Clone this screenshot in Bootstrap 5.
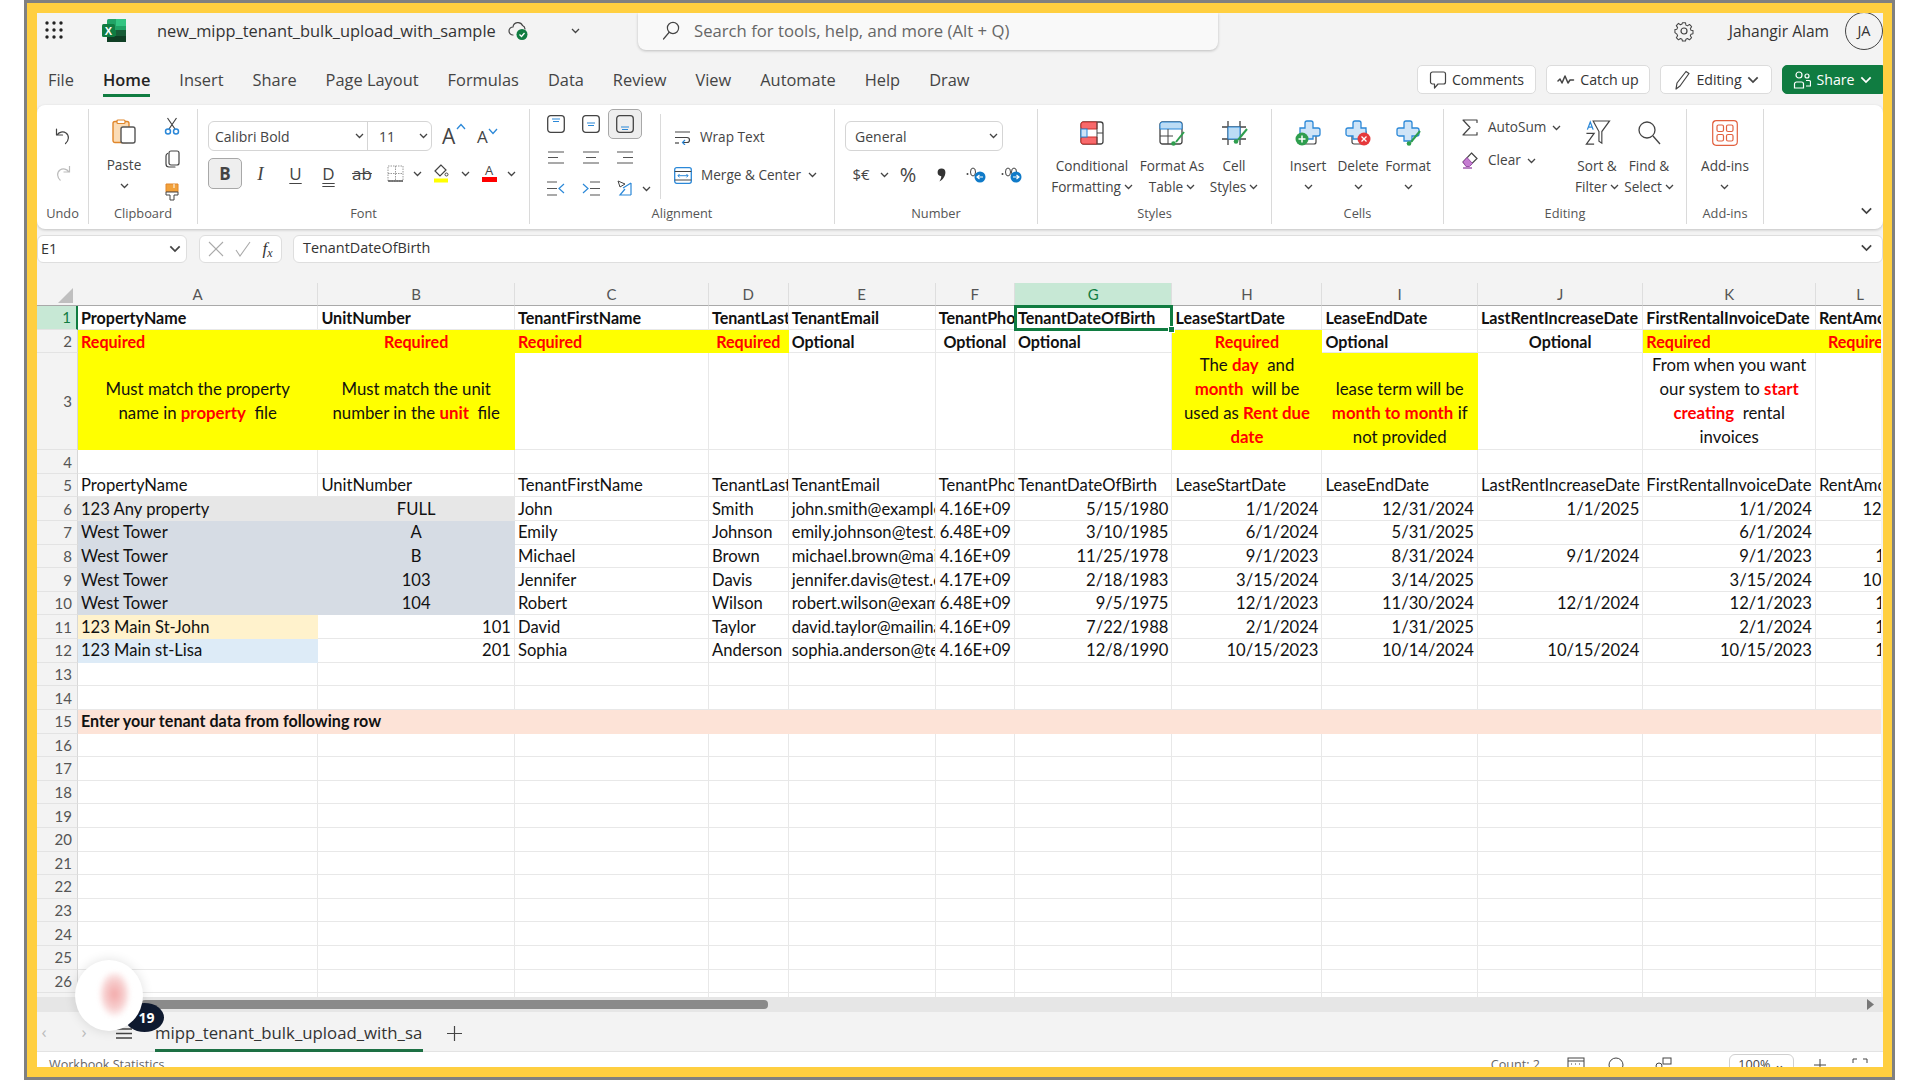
<!DOCTYPE html>
<html lang="en">
<head>
<meta charset="utf-8">
<title>Excel</title>
<link href="https://cdn.jsdelivr.net/npm/bootstrap@5.3.0/dist/css/bootstrap.min.css" rel="stylesheet">
<style>
html,body{height:100%;margin:0;background:#fff;overflow:hidden}
body{font-family:"Open Sans","Noto Sans",sans-serif;color:#333}
.frame{margin-left:24px;width:1871px;height:1080px;border:3px solid #808080}
.shell{position:relative;height:100%;border:10px solid #ffcf40;border-right-width:9px;background:#f3f3f3;display:flex;flex-direction:column;overflow:hidden}
svg{display:block;flex:none}
.ic{fill:none;stroke:#444;stroke-width:1.2;stroke-linecap:round;stroke-linejoin:round}
.chev{width:9px;height:6px;fill:none;stroke:#444;stroke-width:1.3}
/* title bar */
.tbar{height:47px;flex:none;display:flex;align-items:flex-start}
.waffle{width:20px;height:20px;margin:7px 0 0 7px}
.xl-logo{width:26px;height:25px;margin:5px 0 0 37px}
.ttl{width:338px;margin:7px 0 0 30px;font-size:16.4px;white-space:nowrap;line-height:22px;color:#333}
.sync{width:21px;height:20px;margin:8px 0 0 13px}
.ttl-chev{margin:15px 0 0 42px}
.srch{width:583px;height:37px;margin-left:58px;background:#f9f9f9;border-radius:0 0 8px 8px;box-shadow:0 1px 3px rgba(0,0,0,.22);display:flex;align-items:center;padding:0 0 2px 24px;color:#666;font-size:16.7px}
.srch svg{margin-right:14px}
.gear{width:22px;height:22px;margin:7px 0 0 455px}
.uname{margin:7px 0 0 34px;font-size:15.6px;line-height:22px;white-space:nowrap;width:117px}
.avat{width:38px;height:38px;border:1px solid #444;border-radius:50%;margin-top:-1px;display:flex;align-items:center;justify-content:center;font-size:14.5px;flex:none}
/* tabs */
.tabrow{height:45px;flex:none;display:flex;justify-content:space-between}
.rtabs{display:flex;gap:29px;padding-left:11px;list-style:none;margin:0;font-size:16.4px;line-height:22px;padding-top:9px}
.rtabs .nav-link{padding:0 0 3px;color:#444;border-bottom:3px solid transparent;height:28px}
.rtabs .nav-link.active{color:#222;font-weight:600;border-bottom-color:#107c41}
.acts{display:flex;gap:10px;padding-top:5px;height:34px}
.acts .btn{height:29px;display:flex;align-items:center;gap:5px;font-size:14.2px;padding:0 9px;background:#fff;border:1px solid #dcdcdc;border-radius:5px;color:#333;white-space:nowrap}
.acts .b-com{width:119px;justify-content:center}
.acts .b-cat{width:104px;justify-content:center}
.acts .b-edi{width:112px;justify-content:center}
.acts .b-sha{width:101px;justify-content:center;background:#107c41;border-color:#107c41;color:#fff;border-radius:5px 0 0 5px}
/* ribbon */
.rbn{height:124px;flex:none;background:#fff;border-radius:8px;box-shadow:0 1px 3px rgba(0,0,0,.2);display:flex;padding:4px 0 5px;font-size:13.6px;color:#444;position:relative}
.grp{display:flex;flex-direction:column;border-right:1.5px solid #dadada;flex:none}
.gbd{height:93px;display:flex}
.glb{height:22px;text-align:center;font-size:12.8px;color:#555;line-height:22px}
.g1{width:52px}.g2{width:109px}.g3{width:332px}.g4{width:305px}.g5{width:203px}.g6{width:234px}.g7{width:172px}.g8{width:243px}.g9{width:77px}
.undoc{width:100%;display:flex;flex-direction:column;align-items:center;gap:19px;padding-top:18px}
.pastec{width:70px;display:flex;flex-direction:column;align-items:center;padding-top:10px}
.pastec .lbl{margin-top:11px;line-height:20px}
.pastec .chev{margin-top:8px}
.clipc{width:26px;display:flex;flex-direction:column;align-items:center;gap:15px;padding-top:8px}
.fontc{padding:12px 0 0 10px}
.fsel{width:224px;height:30px;border:1px solid #d5d5d5;border-radius:6px;display:flex;align-items:center;font-size:14px}
.fnm{width:159px;height:100%;border-right:1px solid #d5d5d5;display:flex;align-items:center;justify-content:space-between;padding:0 3px 0 6px}
.fsz{flex:1;display:flex;align-items:center;justify-content:space-between;padding:0 3px 0 11px}
.fgrow{display:flex;align-items:center}
.grA{font-size:21px;line-height:1;position:relative;margin-left:10px;width:26px}
.grB{font-size:17px;line-height:1;margin-left:9px;width:24px;display:flex}
.frow2{display:grid;grid-template-columns:34px 37px 33px 33px 34px 33px 11px 36px 13px 34px 10px;height:31px;margin-top:7px;align-items:center;justify-items:center;font-size:17px;line-height:1}
.bon{width:34px;height:31px;background:#eee;border:1px solid #a8a8a8;border-radius:5px;display:flex;align-items:center;justify-content:center;font-weight:700;font-size:17px}
.tu{text-decoration:underline;text-underline-offset:3px}
.td2{text-decoration:underline double;text-underline-offset:3px}
.ts{text-decoration:line-through}
.tit{font-family:"Liberation Serif",serif;font-style:italic;font-size:19px}
.alg{padding-left:9px;display:grid;grid-template-columns:34px 35px 34px;grid-template-rows:30px 36px 26px;align-items:center;justify-items:center;width:112px;flex:none}
.alon{width:34px;height:30px;background:#eee;border:1px solid #a8a8a8;border-radius:5px;display:flex;align-items:center;justify-content:center}
.achev{width:0;padding-bottom:10px;display:flex;flex-direction:column;justify-content:flex-end}
.wmc{margin:5px 0 0 18px;border-left:1.5px solid #dadada;padding:12px 0 0 13px;height:85px;display:flex;flex-direction:column;gap:16px;font-size:13.6px}
.wmi{display:flex;align-items:center;gap:9px;height:22px;white-space:nowrap}
.numc{padding:12px 0 0 10px}
.nsel{width:158px;height:30px;border:1px solid #d5d5d5;border-radius:6px;display:flex;align-items:center;justify-content:space-between;padding:0 4px 0 9px;font-size:14px}
.nrow{display:grid;grid-template-columns:32px 14px 34px 32px 40px 32px;margin-top:8px;height:31px;align-items:center;justify-items:center;font-size:15px}
.bigc{display:flex;flex-direction:column;align-items:center;padding-top:11px;flex:none;text-align:center}
.bigc svg.big{height:26px;margin-bottom:9px}
.bigc .lb{line-height:21px;white-space:nowrap;display:flex;align-items:center;gap:3px;height:21px}
.stylec{padding-left:12px}.cellc{padding-left:11px}
.w84{width:84px}.w76{width:76px}.w48{width:48px}.w50{width:50px}.w52{width:52px}
.edl{width:127px;flex:none;padding:7px 0 0 18px;display:flex;flex-direction:column;gap:10px}
.edi{display:flex;align-items:center;height:23px;white-space:nowrap}
.edi svg:first-child{margin-right:10px}
.edi .chev{margin-left:6px}
.rbn-more{position:absolute;right:10px;bottom:14px}
/* formula */
.fbar{height:28px;flex:none;margin-top:6px;display:flex;gap:11px;font-size:14.4px}
.nbox,.fxb,.fml{background:#fff;border:1px solid #dedede;border-radius:6px;display:flex;align-items:center}
.nbox{width:150px;justify-content:space-between;padding:0 5px 0 3px;margin-right:1px}
.fxb{width:83px;justify-content:space-around;padding:0 3px}
.fml{flex:1;justify-content:space-between;padding:0 9px 3px 9px}
/* sheet */
.shwrap{flex:1;min-height:0;margin:20px 2px 0 0;overflow:hidden;background:#f3f3f3}
.xs{border-collapse:separate;border-spacing:0;table-layout:fixed;width:1868px;font-family:Lato,"Liberation Sans",sans-serif;font-size:16.6px;color:#111}
.xs col.h0{width:41px}.xs col.ca{width:240.4px}.xs col.cb{width:196.6px}.xs col.cc{width:194px}.xs col.cd{width:79.7px}.xs col.ce{width:147px}.xs col.cf{width:79.3px}.xs col.cg{width:157.5px}.xs col.ch{width:150px}.xs col.ci{width:155.5px}.xs col.cj{width:165.4px}.xs col.ck{width:172.6px}.xs col.cl{width:89px}
.xs th,.xs td{height:23.62px;padding:0 3px;border-right:1px solid #e8e8e8;border-bottom:1.5px solid #e8e8e8;white-space:nowrap;overflow:hidden;font-weight:400;line-height:20px;vertical-align:middle}
.xs td{background:#fff}
.xs thead th{height:23px;background:#f3f3f3;text-align:center;color:#555;border-right:1px solid #dedede;border-bottom:1.5px solid #a9a9a9;font-size:15px;overflow:visible}
.xs tbody th{background:#f3f3f3;color:#555;text-align:right;padding-right:5px;font-size:15px;border-right:1px solid #d8d8d8;border-bottom:1px solid #e3e3e3}
.xs thead th.corner{border-right:0;padding:0}
.xs thead th.gsel{background:#c7e8d5;color:#107c41;border-bottom-color:#107c41}
.xs tbody th.rsel{background:#c7e8d5;color:#107c41;border-right:2px solid #107c41}
.xs .hdb td{font-weight:700;font-size:16.1px;padding-top:2px}
.xs .r3 td,.xs .r3 th{height:96.8px}
.xs .r3 td{line-height:24px;white-space:normal;text-align:center;padding:0 2px;font-size:16.8px}
.xs td.y{background:#ff0;border-color:#ff0}
.xs td.vb{vertical-align:bottom}
.xs td.tr{text-align:right}.xs td.tc{text-align:center}
.xs td.pz{padding-right:0}
.xs td.fg{background:#e7e7e7;border-color:#e7e7e7}
.xs td.fb{background:#d6dce4;border-color:#d6dce4}
.xs td.fo{background:#fff2cc;border-color:#fff2cc}
.xs td.fl{background:#ddebf7;border-color:#ddebf7}
.xs td.fp{background:#fde3d7;border-color:#fde3d7;font-weight:700;font-size:16.1px}
.rq{color:#f00;font-weight:700}
.sel{position:relative;overflow:visible!important;outline:3px solid #107c41;outline-offset:-2px;z-index:2}
.sel i{position:absolute;right:-4px;bottom:-4px;width:7px;height:7px;background:#107c41;border:1px solid #fff}
/* bottom */
.hsb{height:15px;flex:none;background:#e6e6e6;position:relative;display:flex;align-items:center;justify-content:flex-end;padding-right:9px}
.thumb{position:absolute;left:104px;width:627px;top:3px;height:9px;background:#8a8a8a;border-radius:4px}
.stabs{height:40px;flex:none;display:flex;align-items:flex-start;border-bottom:1px solid #e3e3e3;padding-top:11px}
.nv{color:#bbb;width:40px;text-align:center;font-size:17px;line-height:18px}
.nv1{margin-left:-13px}
.burger{width:16px;height:14px;margin:3px 0 0 12px}
.stab{margin-left:23px;width:268px;font-size:16.8px;height:29px;border-bottom:3px solid #1d7044;white-space:nowrap;line-height:20px;color:#333;overflow:hidden}
.plus{margin:3px 0 0 24px}
.sbar{height:15px;flex:none;background:#fff;display:flex;overflow:hidden;font-size:12.6px;color:#666;padding:4px 0 0 12px;position:relative;line-height:18px}
.sbar .rr{margin-left:auto;display:flex;align-items:flex-start;height:30px}
.zbox{width:65px;height:26px;border:1px solid #cfcfcf;border-radius:6px;margin:-2px 17px 0 20px;text-align:center;padding-top:1px;color:#444}
.sb-i{width:18px;height:14px;margin-top:1px}
.sbi-a{margin-left:22px}.sbi-b{margin-left:30px}
.sbi-c{margin:1px 14px 0 22px}
.zdash{margin-left:22px;width:14px;height:2px;background:#ddd;margin-top:12px}
.cntxt{margin-right:27px}
.blob{position:absolute;left:38px;top:947px;width:68px;height:71px;border-radius:50%/50%;background:#fff;box-shadow:0 0 12px rgba(0,0,0,.12);overflow:hidden;z-index:5}
.blob::after{content:"";position:absolute;left:6px;top:12px;width:54px;height:48px;background:radial-gradient(ellipse 30% 50% at 62% 46%,#f3a9a9 0,#f7cfcf 60%,rgba(255,255,255,0) 100%);filter:blur(2px)}
.cnt{position:absolute;left:88px;top:990px;width:39px;height:29px;border-radius:50%;background:#0f1a30;color:#fff;font-size:14px;font-weight:700;display:flex;align-items:center;justify-content:center;z-index:4;padding-left:4px}
.grA svg{position:absolute;left:14px;top:-3px}
.colorA{width:15px;height:20px;font-size:13px;line-height:13px;text-align:center}
.fsub{font-family:"Liberation Serif",serif;font-style:italic;font-size:17px}
.fsub sub{font-size:12px}
.chev-m{width:12px;height:8px}
.chev-l{width:13px;height:8px}
.chev-w{width:12px;height:8px;stroke:#fff}
.cn-b{margin-left:-2px}
.corner svg{margin:2px 0 0 21px}
</style>
</head>
<body>
<svg width="0" height="0" class="position-absolute">
<defs>
<symbol id="c" viewBox="0 0 9 6"><path d="M1 1l3.500 3.500L8 1"/></symbol>
</defs>
</svg>
<div class="frame">
<div class="shell">

<div class="tbar">
<svg class="waffle" viewBox="0 0 20 20" fill="#222"><circle cx="3" cy="3" r="1.700"/><circle cx="10" cy="3" r="1.700"/><circle cx="17" cy="3" r="1.700"/><circle cx="3" cy="10" r="1.700"/><circle cx="10" cy="10" r="1.700"/><circle cx="17" cy="10" r="1.700"/><circle cx="3" cy="17" r="1.700"/><circle cx="10" cy="17" r="1.700"/><circle cx="17" cy="17" r="1.700"/></svg>
<svg class="xl-logo" viewBox="0 0 26 25"><rect x="6" y="1" width="19" height="23" rx="1.500" fill="#21a366"/><rect x="15" y="1" width="10" height="7" fill="#33c481"/><rect x="6" y="12" width="10" height="6" fill="#107c41"/><rect x="15" y="12" width="10" height="6" fill="#185c37"/><rect x="6" y="18" width="19" height="6" fill="#103f25"/><rect x="1" y="6" width="13" height="13" rx="1.500" fill="#107c41"/><text x="7.500" y="16.500" font-size="11" font-weight="700" fill="#fff" text-anchor="middle" font-family="Liberation Sans">X</text></svg>
<div class="ttl">new_mipp_tenant_bulk_upload_with_sample</div>
<svg class="sync" viewBox="0 0 21 20"><path class="ic" d="M5 14a4 4 0 0 1 0-8 5 5 0 0 1 9.500-1.500A4 4 0 0 1 17 8"/><circle cx="14" cy="13.500" r="5.500" fill="#107c41"/><path d="M11.500 13.500l2 2 3-3.500" stroke="#fff" stroke-width="1.300" fill="none"/></svg>
<svg class="chev ttl-chev" viewBox="0 0 9 6"><use href="#c"/></svg>
<div class="srch"><svg width="18" height="20" viewBox="0 0 18 20" class="ic"><circle cx="11" cy="7" r="5.600"/><path d="M7 11.500L1.500 18"/></svg>Search for tools, help, and more (Alt + Q)</div>
<svg class="gear" viewBox="0 0 22 22"><circle cx="11" cy="11" r="3" fill="none" stroke="#444" stroke-width="1.200"/><path fill="none" stroke="#444" stroke-width="1.200" stroke-linejoin="round" d="M9.200 1.500h3.600l.5 2.700 1.800.8 2.300-1.600 2.500 2.600-1.500 2.300.8 1.800 2.300.5v3.600l-2.300.5-.8 1.800 1.500 2.300-2.500 2.500-2.300-1.500-1.800.8-.5 2.100H9.200l-.5-2.100-1.800-.8-2.300 1.500-2.500-2.500 1.500-2.300-.8-1.800L.5 13V9.400l2.300-.5.8-1.800-1.500-2.300L4.600 2.200l2.300 1.600 1.800-.8z" transform="translate(1.500 1.500) scale(.86)"/></svg>
<div class="uname">Jahangir Alam</div>
<div class="avat">JA</div>
</div>

<div class="tabrow">
<ul class="nav rtabs">
<li class="nav-item"><a class="nav-link" href="#">File</a></li>
<li class="nav-item"><a class="nav-link active" href="#">Home</a></li>
<li class="nav-item"><a class="nav-link" href="#">Insert</a></li>
<li class="nav-item"><a class="nav-link" href="#">Share</a></li>
<li class="nav-item"><a class="nav-link" href="#">Page Layout</a></li>
<li class="nav-item"><a class="nav-link" href="#">Formulas</a></li>
<li class="nav-item"><a class="nav-link" href="#">Data</a></li>
<li class="nav-item"><a class="nav-link" href="#">Review</a></li>
<li class="nav-item"><a class="nav-link" href="#">View</a></li>
<li class="nav-item"><a class="nav-link" href="#">Automate</a></li>
<li class="nav-item"><a class="nav-link" href="#">Help</a></li>
<li class="nav-item"><a class="nav-link" href="#">Draw</a></li>
</ul>
<div class="acts">
<button class="btn b-com"><svg width="18" height="20" viewBox="0 0 18 20" class="ic"><path d="M3.500 2h11a2 2 0 0 1 2 2v8a2 2 0 0 1-2 2H9l-3.500 4v-4H3.500a2 2 0 0 1-2-2V4a2 2 0 0 1 2-2z"/></svg>Comments</button>
<button class="btn b-cat"><svg width="18" height="12" viewBox="0 0 18 12" class="ic"><path d="M1 7l2-2 2 4 3-7 3 7 2-3h3.500" stroke-width="1.500"/></svg>Catch up</button>
<button class="btn b-edi"><svg width="18" height="22" viewBox="0 0 18 22" class="ic"><path d="M4 14L13 2.500l3 2L7 17l-4 3z"/></svg>Editing<svg class="chev chev-m" viewBox="0 0 9 6"><use href="#c"/></svg></button>
<button class="btn b-sha"><svg width="18" height="20" viewBox="0 0 18 20" fill="none" stroke="#fff" stroke-width="1.200"><circle cx="6" cy="5" r="3"/><circle cx="14" cy="6" r="2"/><path d="M1.500 18v-4a2 2 0 0 1 2-2h5a2 2 0 0 1 2 2v4zM13 10.500h3a1.500 1.500 0 0 1 1.500 1.500v4H13"/></svg>Share<svg class="chev chev-w" viewBox="0 0 9 6"><use href="#c"/></svg></button>
</div>
</div>

<div class="rbn">
<div class="grp g1"><div class="gbd"><div class="undoc">
<svg width="16" height="18" viewBox="0 0 16 18" class="ic"><path d="M1.500 2v6h6M2 8C4 5 8 4 11 6c3.500 2.500 3 7.500-.5 10.500"/></svg>
<svg width="16" height="18" viewBox="0 0 16 18" fill="none" stroke="#bbb" stroke-width="1.200"><path d="M14.500 2v6h-6M14 8c-2-3-6-4-9-2-3.500 2.500-3 7.500.5 10.500"/></svg>
</div></div><div class="glb">Undo</div></div>

<div class="grp g2"><div class="gbd">
<div class="pastec">
<svg width="24" height="25" viewBox="0 0 24 25"><rect x="1" y="2.500" width="16" height="21" rx="2" fill="#fbdcb6" stroke="#e0862a" stroke-width="1.400"/><rect x="5" y="1" width="8" height="3.500" rx="1" fill="#fff" stroke="#e0862a" stroke-width="1.200"/><rect x="9" y="8" width="14" height="16" rx="2" fill="#fff" stroke="#555" stroke-width="1.400"/></svg>
<div class="lbl">Paste</div>
<svg class="chev" viewBox="0 0 9 6"><use href="#c"/></svg>
</div>
<div class="clipc">
<svg width="16" height="18" viewBox="0 0 16 18"><path d="M3.500 1l7.500 11M12.500 1L5 12" stroke="#444" stroke-width="1.200" fill="none"/><circle cx="4" cy="14.500" r="2.500" fill="none" stroke="#2b88d8" stroke-width="1.500"/><circle cx="12" cy="14.500" r="2.500" fill="none" stroke="#2b88d8" stroke-width="1.500"/></svg>
<svg width="15" height="18" viewBox="0 0 15 18" class="ic"><rect x="4" y="1" width="10" height="14" rx="2"/><path d="M2.500 3.500C1.500 4 1 5 1 6v8a3 3 0 0 0 3 3h6"/></svg>
<svg width="14" height="18" viewBox="0 0 14 18"><path d="M1 1h12v8H1z" fill="#f2a13a" stroke="#e0862a"/><path d="M9 1v4" stroke="#fff"/><path d="M1 9h12v3H9v5H5v-5H1z" fill="#fff" stroke="#444"/></svg>
</div>
</div><div class="glb">Clipboard</div></div>

<div class="grp g3"><div class="gbd"><div class="fontc">
<div class="fgrow">
<div class="fsel"><div class="fnm">Calibri Bold<svg class="chev" viewBox="0 0 9 6"><use href="#c"/></svg></div><div class="fsz">11<svg class="chev" viewBox="0 0 9 6"><use href="#c"/></svg></div></div>
<div class="grA">A<svg width="10" height="7" viewBox="0 0 10 7" fill="none" stroke="#2b88d8" stroke-width="1.300"><path d="M1 6l4-4.500L9 6"/></svg></div>
<div class="grB">A<svg width="10" height="7" viewBox="0 0 10 7" fill="none" stroke="#2b88d8" stroke-width="1.300"><path d="M1 1l4 4.500L9 1"/></svg></div>
</div>
<div class="frow2">
<div class="bon">B</div>
<div class="tit">I</div>
<div class="tu">U</div>
<div class="td2">D</div>
<div class="ts">ab</div>
<svg width="17" height="17" viewBox="0 0 17 17"><path d="M1 1h15v15H1zM8.500 1v15M1 8.500h15" fill="none" stroke="#999" stroke-width="1" stroke-dasharray="1.500 1"/><path d="M1 16h15" stroke="#444" stroke-width="1.300"/></svg>
<svg class="chev" viewBox="0 0 9 6"><use href="#c"/></svg>
<svg width="16" height="19" viewBox="0 0 16 19"><path d="M8 1L2 7l5 5 6-6z" fill="none" stroke="#444" stroke-width="1.200"/><circle cx="13.500" cy="10.500" r="1.500" fill="none" stroke="#444"/><rect x="1" y="14.500" width="14" height="4" fill="#ff0"/></svg>
<svg class="chev" viewBox="0 0 9 6"><use href="#c"/></svg>
<div class="colorA">A<svg width="15" height="5" viewBox="0 0 15 5"><rect width="15" height="5" fill="#f00"/></svg></div>
<svg class="chev" viewBox="0 0 9 6"><use href="#c"/></svg>
</div>
</div></div><div class="glb">Font</div></div>

<div class="grp g4"><div class="gbd">
<div class="alg">
<svg width="18" height="18" viewBox="0 0 18 18"><rect x=".7" y=".7" width="16.600" height="16.600" rx="3" fill="none" stroke="#444" stroke-width="1.300"/><path d="M5 4h8M6 6.500h6" stroke="#2b88d8" stroke-width="1.200"/></svg>
<svg width="18" height="18" viewBox="0 0 18 18"><rect x=".7" y=".7" width="16.600" height="16.600" rx="3" fill="none" stroke="#444" stroke-width="1.300"/><path d="M5 8h8M6 10.500h6" stroke="#2b88d8" stroke-width="1.200"/></svg>
<div class="alon"><svg width="18" height="18" viewBox="0 0 18 18"><rect x=".7" y=".7" width="16.600" height="16.600" rx="3" fill="none" stroke="#444" stroke-width="1.300"/><path d="M5 12h8M6 14.500h6" stroke="#2b88d8" stroke-width="1.200"/></svg></div>
<svg width="16" height="13" viewBox="0 0 16 13" stroke="#555" stroke-width="1.200"><path d="M0 1h16M0 6.500h10M0 12h16"/></svg>
<svg width="16" height="13" viewBox="0 0 16 13" stroke="#555" stroke-width="1.200"><path d="M0 1h16M3 6.500h10M0 12h16"/></svg>
<svg width="16" height="13" viewBox="0 0 16 13" stroke="#555" stroke-width="1.200"><path d="M0 1h16M6 6.500h10M0 12h16"/></svg>
<svg width="18" height="15" viewBox="0 0 18 15" fill="none"><path d="M0 1h10M0 7.500h10M0 14h10" stroke="#555" stroke-width="1.200"/><path d="M17 3l-5 4.500L17 12" stroke="#2b88d8" stroke-width="1.200"/></svg>
<svg width="18" height="15" viewBox="0 0 18 15" fill="none"><path d="M8 1h10M8 7.500h10M8 14h10" stroke="#555" stroke-width="1.200"/><path d="M1 3l5 4.500L1 12" stroke="#2b88d8" stroke-width="1.200"/></svg>
<svg width="17" height="18" viewBox="0 0 17 18" fill="none"><path d="M1 2l7 3-5 3z" stroke="#444"/><path d="M6 9l8-5M14 4v12M14 16H3l5-6" stroke="#2b88d8" stroke-width="1.200"/></svg>
</div>
<div class="achev"><svg class="chev" viewBox="0 0 9 6"><use href="#c"/></svg></div>
<div class="wmc">
<div class="wmi"><svg width="17" height="15" viewBox="0 0 17 15" fill="none"><path d="M1 2h15M1 7.500h12a2.500 2.500 0 0 1 0 5H9" stroke="#444" stroke-width="1.200"/><path d="M1 13h4" stroke="#444" stroke-width="1.200"/><path d="M11 10l-2.500 2.500L11 15" stroke="#2b88d8" stroke-width="1.200"/></svg>Wrap Text</div>
<div class="wmi"><svg width="18" height="17" viewBox="0 0 18 17" fill="none"><rect x=".7" y=".7" width="16.600" height="15.600" rx="2" stroke="#2b88d8" stroke-width="1.300"/><path d="M.7 4.500h16.600M.7 13h16.600" stroke="#444" stroke-width="1"/><path d="M4 8.700h10M5.500 7L4 8.700l1.500 1.700M12.500 7L14 8.700l-1.500 1.700" stroke="#2b88d8"/></svg>Merge &amp; Center<svg class="chev cn-b" viewBox="0 0 9 6"><use href="#c"/></svg></div>
</div>
</div><div class="glb">Alignment</div></div>

<div class="grp g5"><div class="gbd"><div class="numc">
<div class="nsel">General<svg class="chev" viewBox="0 0 9 6"><use href="#c"/></svg></div>
<div class="nrow">
<div>$€</div><svg class="chev" viewBox="0 0 9 6"><use href="#c"/></svg><div class="fs-5">%</div>
<svg width="9" height="14" viewBox="0 0 9 14"><path d="M.6 4.300a3.900 3.900 0 1 1 7.800 0c0 4-2.700 7.800-6 9.200 1-1.800 1.800-3.200 1.900-5.300A3.900 3.900 0 0 1 .6 4.300z" fill="#333"/></svg>
<svg width="22" height="18" viewBox="0 0 22 18" fill="none"><circle cx="1.500" cy="8" r="1" fill="#444"/><ellipse cx="7" cy="6" rx="2.500" ry="4" stroke="#444"/><circle cx="14" cy="11" r="5.500" fill="#0f7ac8"/><path d="M11 11h6M13.500 9L11 11l2.500 2" stroke="#fff" stroke-width="1.200"/></svg>
<svg width="24" height="18" viewBox="0 0 24 18" fill="none"><circle cx="1.500" cy="8" r="1" fill="#444"/><ellipse cx="7" cy="6" rx="2.500" ry="4" stroke="#444"/><ellipse cx="13" cy="6" rx="2.500" ry="4" stroke="#444"/><circle cx="15" cy="11" r="5.500" fill="#0f7ac8"/><path d="M12 11h6M15.500 9l2.500 2-2.500 2" stroke="#fff" stroke-width="1.200"/></svg>
</div>
</div></div><div class="glb">Number</div></div>

<div class="grp g6"><div class="gbd stylec">
<div class="bigc w84"><svg class="big" width="24" height="26" viewBox="0 0 24 26"><rect x="1" y="2" width="22" height="22" rx="2.500" fill="#fff" stroke="#444" stroke-width="1.300"/><path d="M3 2h14v7H3a2 2 0 0 1-2-2V4a2 2 0 0 1 2-2zM3 17h14v7H3a2 2 0 0 1-2-2v-3a2 2 0 0 1 2-2z" fill="#f8696b" stroke="#c9302c"/><rect x="1" y="9" width="6" height="8" fill="#cfe4f7" stroke="#2b88d8"/><path d="M17 2v22M17 13h6" stroke="#444"/></svg><div class="lb">Conditional</div><div class="lb">Formatting<svg class="chev" viewBox="0 0 9 6"><use href="#c"/></svg></div></div>
<div class="bigc w76"><svg class="big" width="26" height="26" viewBox="0 0 26 26"><rect x="1" y="2" width="22" height="22" rx="2.500" fill="#fff" stroke="#444" stroke-width="1.300"/><path d="M3.500 2h17a2.500 2.500 0 0 1 2.500 2.500V9H1V4.500A2.500 2.500 0 0 1 3.500 2z" fill="#bcdcf5" stroke="#2b88d8"/><path d="M1 16h13M9 9v15" stroke="#444"/><path d="M25 12l-8 10" stroke="#2e9e4e" stroke-width="2"/><circle cx="14.500" cy="23.500" r="2.300" fill="#2e9e4e"/></svg><div class="lb">Format As</div><div class="lb">Table<svg class="chev" viewBox="0 0 9 6"><use href="#c"/></svg></div></div>
<div class="bigc w48"><svg class="big" width="27" height="26" viewBox="0 0 27 26"><path d="M7 1v24M19 1v24M1 7h24M1 19h24" stroke="#444" stroke-width="1.300"/><rect x="7" y="7" width="12" height="12" fill="#bcdcf5" stroke="#2b88d8"/><path d="M26 9l-9 11" stroke="#2e9e4e" stroke-width="2"/><circle cx="15" cy="21.500" r="2.300" fill="#2e9e4e"/></svg><div class="lb">Cell</div><div class="lb">Styles<svg class="chev" viewBox="0 0 9 6"><use href="#c"/></svg></div></div>
</div><div class="glb">Styles</div></div>

<div class="grp g7"><div class="gbd cellc">
<div class="bigc w50"><svg class="big" width="26" height="26" viewBox="0 0 26 26"><rect x="7" y="10" width="14" height="14" rx="2" fill="#fff" stroke="#444" stroke-width="1.200"/><path d="M10 3a2 2 0 0 1 2-2h4a2 2 0 0 1 2 2v5h5a2 2 0 0 1 2 2v4a2 2 0 0 1-2 2h-5v3h-8v-3H5v-8h5z" fill="#cfe4f7" stroke="#2b88d8" stroke-width="1.300"/><circle cx="7" cy="19" r="6.500" fill="#2e9e4e"/><path d="M3.500 19h7M7 15.500v7" stroke="#fff" stroke-width="1.500"/></svg><div class="lb">Insert</div><div class="lb"><svg class="chev" viewBox="0 0 9 6"><use href="#c"/></svg></div></div>
<div class="bigc w50"><svg class="big" width="26" height="26" viewBox="0 0 26 26"><rect x="7" y="10" width="14" height="14" rx="2" fill="#fff" stroke="#444" stroke-width="1.200"/><path d="M8 3a2 2 0 0 1 2-2h4a2 2 0 0 1 2 2v5h5v8H16v3H8v-3H3a2 2 0 0 1-2-2v-4a2 2 0 0 1 2-2h5z" fill="#cfe4f7" stroke="#2b88d8" stroke-width="1.300"/><circle cx="19" cy="19" r="6.500" fill="#e5383b"/><path d="M16.500 16.500l5 5M21.500 16.500l-5 5" stroke="#fff" stroke-width="1.300"/></svg><div class="lb">Delete</div><div class="lb"><svg class="chev" viewBox="0 0 9 6"><use href="#c"/></svg></div></div>
<div class="bigc w50"><svg class="big" width="26" height="26" viewBox="0 0 26 26"><path d="M9 3a2 2 0 0 1 2-2h4a2 2 0 0 1 2 2v5h5a2 2 0 0 1 2 2v4a2 2 0 0 1-2 2h-5v5H9v-5H4a2 2 0 0 1-2-2v-4a2 2 0 0 1 2-2h5z" fill="#cfe4f7" stroke="#2b88d8" stroke-width="1.300"/><path d="M25 11l-9 11" stroke="#2e9e4e" stroke-width="2"/><circle cx="14" cy="23.500" r="2.300" fill="#2e9e4e"/></svg><div class="lb">Format</div><div class="lb"><svg class="chev" viewBox="0 0 9 6"><use href="#c"/></svg></div></div>
</div><div class="glb">Cells</div></div>

<div class="grp g8"><div class="gbd">
<div class="edl">
<div class="edi"><svg width="16" height="17" viewBox="0 0 16 17" class="ic"><path d="M15 3.500V1H1l7 7.500L1 16h14v-2.500"/></svg>AutoSum<svg class="chev" viewBox="0 0 9 6"><use href="#c"/></svg></div>
<div class="edi"><svg width="16" height="17" viewBox="0 0 16 17"><path d="M9.500 1L15 6.500 8 13.500H4L1 10z" fill="#fff" stroke="#444" stroke-width="1.200"/><path d="M5 5.500l5.500 6-3 3H4l-3-4.500z" fill="#c57dd1" stroke="#9a4fa8"/><path d="M1 16h9" stroke="#9a4fa8" stroke-width="1.400"/></svg>Clear<svg class="chev" viewBox="0 0 9 6"><use href="#c"/></svg></div>
</div>
<div class="bigc w52"><svg class="big" width="27" height="27" viewBox="0 0 27 27" fill="none"><path d="M9 1h17l-8 11v12l-3-2v-10z" stroke="#444" stroke-width="1.200"/><path d="M3 10l3-8 3 8M4 7.500h4" stroke="#2b88d8" stroke-width="1.300"/><path d="M2 14h8L2 25h8" stroke="#444" stroke-width="1.300"/></svg><div class="lb">Sort &amp;</div><div class="lb">Filter<svg class="chev" viewBox="0 0 9 6"><use href="#c"/></svg></div></div>
<div class="bigc w52"><svg class="big" width="24" height="26" viewBox="0 0 24 26" fill="none" stroke="#444" stroke-width="1.300"><circle cx="10" cy="10" r="8"/><path d="M16 16l7 8"/></svg><div class="lb">Find &amp;</div><div class="lb">Select<svg class="chev" viewBox="0 0 9 6"><use href="#c"/></svg></div></div>
</div><div class="glb">Editing</div></div>

<div class="grp g9"><div class="gbd justify-content-center">
<div class="bigc"><svg class="big" width="26" height="26" viewBox="0 0 26 26" fill="none" stroke="#e2603f" stroke-width="1.200"><rect x=".7" y=".7" width="24.600" height="24.600" rx="3.500"/><rect x="5" y="5" width="6.500" height="6.500" rx="1.500"/><rect x="14.500" y="5" width="6.500" height="6.500" rx="1.500"/><rect x="5" y="14.500" width="6.500" height="6.500" rx="1.500"/><rect x="14.500" y="14.500" width="6.500" height="6.500" rx="1.500"/></svg><div class="lb">Add-ins</div><div class="lb"><svg class="chev" viewBox="0 0 9 6"><use href="#c"/></svg></div></div>
</div><div class="glb">Add-ins</div></div>
<svg class="chev chev-l rbn-more" viewBox="0 0 9 6"><use href="#c"/></svg>
</div>

<div class="fbar">
<div class="nbox">E1<svg class="chev chev-m" viewBox="0 0 9 6"><use href="#c"/></svg></div>
<div class="fxb"><svg width="16" height="16" viewBox="0 0 16 16" stroke="#aaa" stroke-width="1.100"><path d="M1 1l14 14M15 1L1 15"/></svg><svg width="16" height="16" viewBox="0 0 16 16" fill="none" stroke="#aaa" stroke-width="1.100"><path d="M1 9l4 6L15 1"/></svg><span class="fsub">f<sub>x</sub></span></div>
<div class="fml">TenantDateOfBirth<svg class="chev chev-l" viewBox="0 0 9 6"><use href="#c"/></svg></div>
</div>

<div class="shwrap">
<table class="xs">
<colgroup><col class="h0"><col class="ca"><col class="cb"><col class="cc"><col class="cd"><col class="ce"><col class="cf"><col class="cg"><col class="ch"><col class="ci"><col class="cj"><col class="ck"><col class="cl"></colgroup>
<thead><tr><th class="corner"><svg width="15" height="15" viewBox="0 0 15 15"><path d="M15 0v15H0z" fill="#bfbfbf"/></svg></th><th>A</th><th>B</th><th>C</th><th>D</th><th>E</th><th>F</th><th class="gsel">G</th><th>H</th><th>I</th><th>J</th><th>K</th><th>L</th></tr></thead>
<tbody>
<tr class="hdb"><th class="rsel">1</th><td>PropertyName</td><td>UnitNumber</td><td>TenantFirstName</td><td>TenantLastName</td><td>TenantEmail</td><td>TenantPhone</td><td class="sel">TenantDateOfBirth<i></i></td><td>LeaseStartDate</td><td>LeaseEndDate</td><td>LastRentIncreaseDate</td><td>FirstRentalInvoiceDate</td><td>RentAmount</td></tr>
<tr class="hdb"><th>2</th><td class="y rq">Required</td><td class="y rq tc">Required</td><td class="y rq">Required</td><td class="y rq tc">Required</td><td>Optional</td><td class="tc">Optional</td><td>Optional</td><td class="y rq tc">Required</td><td>Optional</td><td class="tc">Optional</td><td class="y rq">Required</td><td class="y rq tc">Required</td></tr>
<tr class="r3"><th>3</th><td class="y">Must match the property<br>name in <span class="rq">property</span>&nbsp; file</td><td class="y">Must match the unit<br>number in the <span class="rq">unit</span>&nbsp; file</td><td></td><td></td><td></td><td></td><td></td><td class="y">The <span class="rq">day</span>&nbsp; and<br><span class="rq">month</span>&nbsp; will be<br>used as <span class="rq">Rent due</span><br><span class="rq">date</span></td><td class="y vb">lease term will be<br><span class="rq">month to month</span> if<br>not provided</td><td></td><td>From when you want<br>our system to <span class="rq">start</span><br><span class="rq">creating</span>&nbsp; rental<br>invoices</td><td></td></tr>
<tr><th>4</th><td></td><td></td><td></td><td></td><td></td><td></td><td></td><td></td><td></td><td></td><td></td><td></td></tr>
<tr><th>5</th><td>PropertyName</td><td>UnitNumber</td><td>TenantFirstName</td><td>TenantLastName</td><td>TenantEmail</td><td>TenantPhone</td><td>TenantDateOfBirth</td><td>LeaseStartDate</td><td>LeaseEndDate</td><td>LastRentIncreaseDate</td><td>FirstRentalInvoiceDate</td><td>RentAmount</td></tr>
<tr><th>6</th><td class="fg">123 Any property</td><td class="fg tc">FULL</td><td>John</td><td>Smith</td><td>john.smith@example.com</td><td class="tr">4.16E+09</td><td class="tr">5/15/1980</td><td class="tr">1/1/2024</td><td class="tr">12/31/2024</td><td class="tr">1/1/2025</td><td class="tr">1/1/2024</td><td class="tr">1200</td></tr>
<tr><th>7</th><td class="fb">West Tower</td><td class="fb tc">A</td><td>Emily</td><td>Johnson</td><td>emily.johnson@test.com</td><td class="tr">6.48E+09</td><td class="tr">3/10/1985</td><td class="tr">6/1/2024</td><td class="tr">5/31/2025</td><td></td><td class="tr">6/1/2024</td><td></td></tr>
<tr><th>8</th><td class="fb">West Tower</td><td class="fb tc">B</td><td>Michael</td><td>Brown</td><td>michael.brown@mail.com</td><td class="tr">4.16E+09</td><td class="tr">11/25/1978</td><td class="tr">9/1/2023</td><td class="tr">8/31/2024</td><td class="tr">9/1/2024</td><td class="tr">9/1/2023</td><td class="tr pz">150</td></tr>
<tr><th>9</th><td class="fb">West Tower</td><td class="fb tc">103</td><td>Jennifer</td><td>Davis</td><td>jennifer.davis@test.com</td><td class="tr">4.17E+09</td><td class="tr">2/18/1983</td><td class="tr">3/15/2024</td><td class="tr">3/14/2025</td><td></td><td class="tr">3/15/2024</td><td class="tr">1000</td></tr>
<tr><th>10</th><td class="fb">West Tower</td><td class="fb tc">104</td><td>Robert</td><td>Wilson</td><td>robert.wilson@example.com</td><td class="tr">6.48E+09</td><td class="tr">9/5/1975</td><td class="tr">12/1/2023</td><td class="tr">11/30/2024</td><td class="tr">12/1/2024</td><td class="tr">12/1/2023</td><td class="tr pz">150</td></tr>
<tr><th>11</th><td class="fo">123 Main St-John</td><td class="tr">101</td><td>David</td><td>Taylor</td><td>david.taylor@mailinator.com</td><td class="tr">4.16E+09</td><td class="tr">7/22/1988</td><td class="tr">2/1/2024</td><td class="tr">1/31/2025</td><td></td><td class="tr">2/1/2024</td><td class="tr pz">150</td></tr>
<tr><th>12</th><td class="fl">123 Main st-Lisa</td><td class="tr">201</td><td>Sophia</td><td>Anderson</td><td>sophia.anderson@test.com</td><td class="tr">4.16E+09</td><td class="tr">12/8/1990</td><td class="tr">10/15/2023</td><td class="tr">10/14/2024</td><td class="tr">10/15/2024</td><td class="tr">10/15/2023</td><td class="tr pz">150</td></tr>
<tr><th>13</th><td></td><td></td><td></td><td></td><td></td><td></td><td></td><td></td><td></td><td></td><td></td><td></td></tr>
<tr><th>14</th><td></td><td></td><td></td><td></td><td></td><td></td><td></td><td></td><td></td><td></td><td></td><td></td></tr>
<tr><th>15</th><td class="fp" colspan="12">Enter your tenant data from following row</td></tr>
<tr><th>16</th><td></td><td></td><td></td><td></td><td></td><td></td><td></td><td></td><td></td><td></td><td></td><td></td></tr>
<tr><th>17</th><td></td><td></td><td></td><td></td><td></td><td></td><td></td><td></td><td></td><td></td><td></td><td></td></tr>
<tr><th>18</th><td></td><td></td><td></td><td></td><td></td><td></td><td></td><td></td><td></td><td></td><td></td><td></td></tr>
<tr><th>19</th><td></td><td></td><td></td><td></td><td></td><td></td><td></td><td></td><td></td><td></td><td></td><td></td></tr>
<tr><th>20</th><td></td><td></td><td></td><td></td><td></td><td></td><td></td><td></td><td></td><td></td><td></td><td></td></tr>
<tr><th>21</th><td></td><td></td><td></td><td></td><td></td><td></td><td></td><td></td><td></td><td></td><td></td><td></td></tr>
<tr><th>22</th><td></td><td></td><td></td><td></td><td></td><td></td><td></td><td></td><td></td><td></td><td></td><td></td></tr>
<tr><th>23</th><td></td><td></td><td></td><td></td><td></td><td></td><td></td><td></td><td></td><td></td><td></td><td></td></tr>
<tr><th>24</th><td></td><td></td><td></td><td></td><td></td><td></td><td></td><td></td><td></td><td></td><td></td><td></td></tr>
<tr><th>25</th><td></td><td></td><td></td><td></td><td></td><td></td><td></td><td></td><td></td><td></td><td></td><td></td></tr>
<tr><th>26</th><td></td><td></td><td></td><td></td><td></td><td></td><td></td><td></td><td></td><td></td><td></td><td></td></tr>
<tr><th></th><td></td><td></td><td></td><td></td><td></td><td></td><td></td><td></td><td></td><td></td><td></td><td></td></tr>
</tbody>
</table>
</div>

<div class="hsb"><div class="thumb"></div><svg width="7" height="11" viewBox="0 0 7 11"><path d="M0 0l7 5.500L0 11z" fill="#777"/></svg></div>
<div class="stabs">
<div class="nv nv1">&#x2039;</div><div class="nv">&#x203A;</div>
<svg class="burger" viewBox="0 0 16 14" stroke="#444" stroke-width="1.300"><path d="M0 3h16M0 7.500h16M0 12h16"/></svg>
<div class="stab">mipp_tenant_bulk_upload_with_sa</div>
<svg class="plus" width="15" height="15" viewBox="0 0 15 15" stroke="#444" stroke-width="1.200"><path d="M7.500 0v15M0 7.500h15"/></svg>
</div>
<div class="sbar">
<div>Workbook Statistics</div>
<div class="rr"><span class="cntxt">Count: 2</span><svg class="sb-i" viewBox="0 0 18 14" fill="none" stroke="#444"><rect x="1" y="1" width="16" height="13"/><path d="M1 4h16M4 7h1M8 7h1M12 7h1"/></svg><svg class="sb-i sbi-a" viewBox="0 0 18 14" fill="none" stroke="#444"><circle cx="9" cy="8" r="7"/></svg><svg class="sb-i sbi-b" viewBox="0 0 18 14" fill="none" stroke="#444"><circle cx="4" cy="9" r="3"/><rect x="8" y="1" width="8" height="6"/></svg><span class="zdash"></span><div class="zbox">100% &#x2304;</div><svg class="sb-i" viewBox="0 0 18 14" stroke="#444"><path d="M9 2v12M3 8h12"/></svg><svg class="sb-i sbi-c" viewBox="0 0 18 14" fill="none" stroke="#444"><path d="M2 6V2h4M12 2h4v4M2 10v4M16 10v4"/></svg></div>
</div>

<div class="blob"></div>
<div class="cnt">19</div>
</div>
</div>
<script src="https://cdn.jsdelivr.net/npm/bootstrap@5.3.0/dist/js/bootstrap.bundle.min.js"></script>
</body>
</html>
